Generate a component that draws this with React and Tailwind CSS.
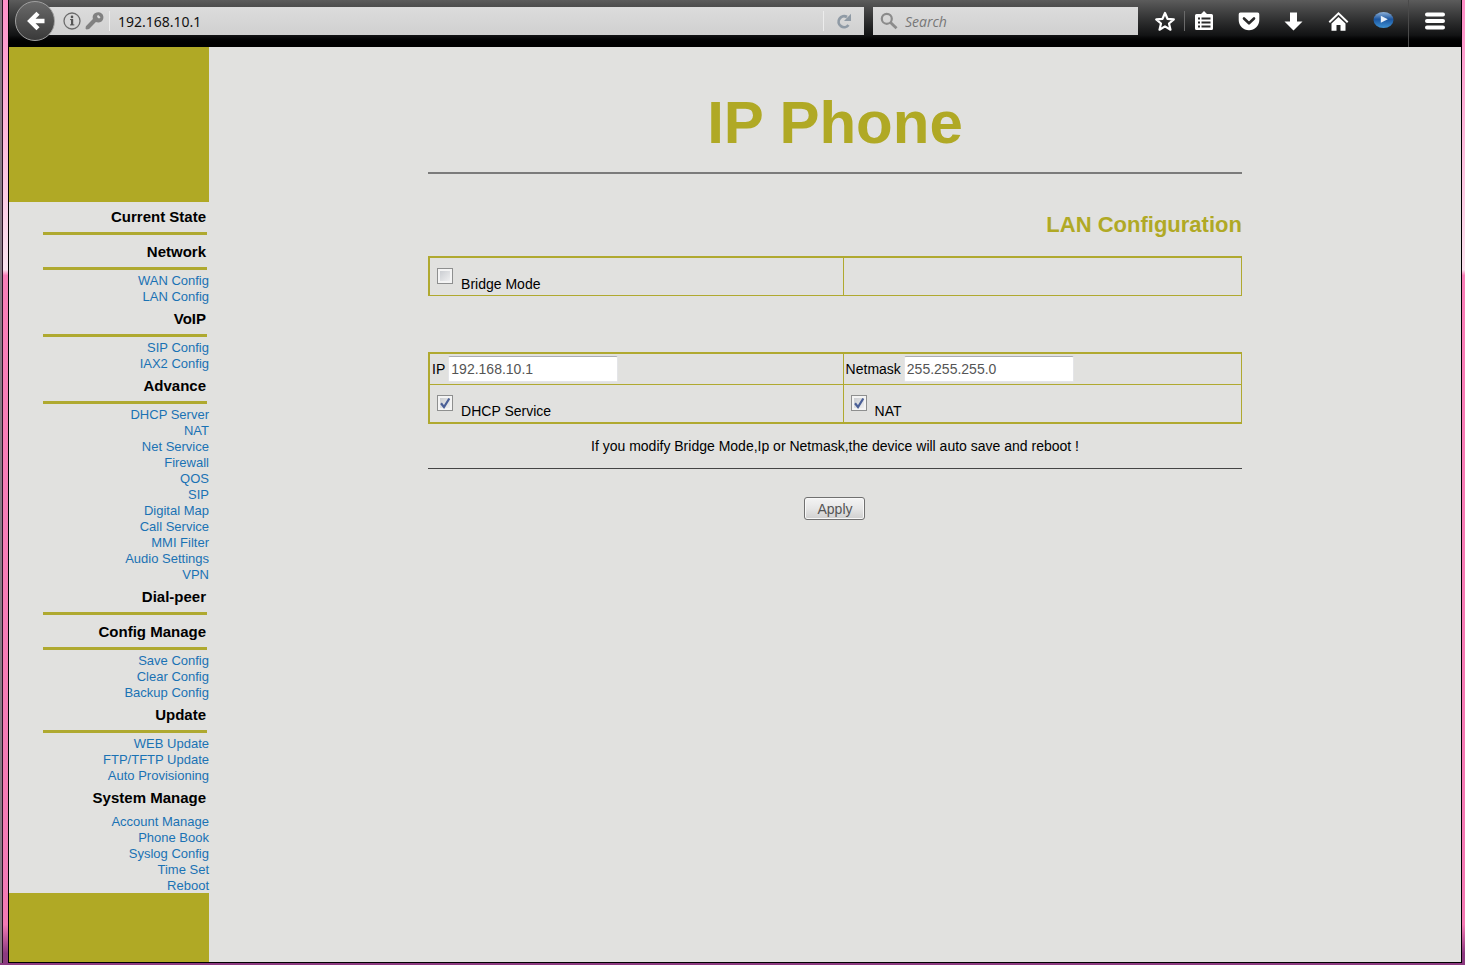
import React from "react";

const sections = [
  { title: "Current State", rule: true, links: [] },
  { title: "Network", rule: true, links: ["WAN Config", "LAN Config"] },
  { title: "VoIP", rule: true, links: ["SIP Config", "IAX2 Config"] },
  {
    title: "Advance",
    rule: true,
    links: [
      "DHCP Server",
      "NAT",
      "Net Service",
      "Firewall",
      "QOS",
      "SIP",
      "Digital Map",
      "Call Service",
      "MMI Filter",
      "Audio Settings",
      "VPN",
    ],
  },
  { title: "Dial-peer", rule: true, links: [] },
  { title: "Config Manage", rule: true, links: ["Save Config", "Clear Config", "Backup Config"] },
  { title: "Update", rule: true, links: ["WEB Update", "FTP/TFTP Update", "Auto Provisioning"] },
  {
    title: "System Manage",
    rule: false,
    links: ["Account Manage", "Phone Book", "Syslog Config", "Time Set", "Reboot"],
  },
];

function ToolButton({ label, className, children }) {
  return (
    <button type="button" aria-label={label} className={"flex h-8 shrink-0 items-center justify-center " + className}>
      {children}
    </button>
  );
}

function Toolbar() {
  return (
    <header className="flex h-[47px] items-center bg-linear-to-b from-[#5c5c5c] via-[#121314] via-75% to-black to-95% pb-[5px] pl-[6px] font-['Noto_Sans','Open_Sans',sans-serif]">
      <button
        type="button"
        aria-label="Back"
        className="z-10 flex size-10 shrink-0 items-center justify-center rounded-full border border-[#a0a0a0] bg-linear-to-b from-[#6a6a6a] to-[#3a3a3a]"
      >
        <svg width="22" height="22" viewBox="0 0 22 22" fill="none" stroke="#fff" strokeWidth="4.400">
          <path d="M20.500 11H7M14 3.200L6.200 11l7.800 7.800" />
        </svg>
      </button>
      <div className="-ml-3 flex h-7 min-w-0 flex-1 items-center bg-linear-to-b from-[#dcdcdc] to-[#d0d0d0] pl-5">
        <svg width="18" height="18" viewBox="0 0 18 18" className="shrink-0">
          <circle cx="9" cy="9" r="8" fill="none" stroke="#6b6b6b" strokeWidth="1.300" />
          <path d="M9.100 7.200v5.800" fill="none" stroke="#555" strokeWidth="2.200" />
          <path d="M7 7.600h3M7 12.900h4.300" fill="none" stroke="#555" strokeWidth="1" />
          <circle cx="9" cy="4.900" r="1.300" fill="#555" />
        </svg>
        <svg width="20" height="20" viewBox="0 0 20 20" className="ml-1 shrink-0" fill="#818181">
          <path
            fillRule="evenodd"
            d="M8.200 4C9.800 1.200 14.100.2 16.700 2.400c2.500 2.100 2.200 6.200-.2 8-1.700 1.300-4 1.300-5.600.6l-6.800 7-2.600.500L.500 17.600l.4-2.400 7-7.200c-.4-1.300-.3-2.900.3-4zM13.200 4a1.700 1.700 0 1 0 2.300 2.300z"
          />
        </svg>
        <span className="ml-1 h-5 w-px bg-[#ececec]" />
        <input
          aria-label="Address"
          defaultValue="192.168.10.1"
          className="ml-2 min-w-0 flex-1 bg-transparent pt-[2px] text-sm text-[#111] outline-none"
        />
        <span className="h-5 w-px bg-[#ececec]" />
        <button type="button" aria-label="Reload" className="flex h-7 w-10 items-center justify-center">
          <svg width="16" height="16" viewBox="0 0 16 16">
            <path d="M12.500 12A5.500 5.500 0 1 1 11 4" fill="none" stroke="#8f9aa5" strokeWidth="2.800" />
            <path d="M15 .8v7.200H8z" fill="#8f9aa5" />
          </svg>
        </button>
      </div>
      <div className="ml-[9px] flex h-7 w-[265px] shrink-0 items-center bg-linear-to-b from-[#dcdcdc] to-[#d0d0d0] pl-[7px]">
        <svg width="18" height="18" viewBox="0 0 18 18" fill="none" stroke="#8b8b8b">
          <circle cx="6.800" cy="6.800" r="5" strokeWidth="2.200" />
          <path d="M10.500 10.500l6 5.800" strokeWidth="2.800" />
        </svg>
        <input
          type="search"
          aria-label="Search"
          placeholder="Search"
          className="ml-[7px] min-w-0 flex-1 bg-transparent pt-[2px] font-['Open_Sans',sans-serif] text-sm italic text-[#222] outline-none placeholder:text-[#777]"
        />
      </div>
      <ToolButton label="Bookmark this page" className="ml-2 w-[38px]">
        <svg width="22" height="22" viewBox="0 0 22 22">
          <path
            d="M11 3l2.500 5.800 6.300.6-4.800 4.100 1.500 6.200L11 16.400l-5.500 3.300L7 13.500 2.200 9.400l6.300-.6z"
            fill="none"
            stroke="#fff"
            strokeWidth="2.200"
            strokeLinejoin="round"
          />
        </svg>
      </ToolButton>
      <span className="h-5 w-px shrink-0 bg-[#6a6a6a]" />
      <ToolButton label="Bookmarks" className="w-[38px]">
        <svg width="20" height="20" viewBox="0 0 20 20">
          <path d="M7 3l3-3 3 3h4.500A1.500 1.500 0 0 1 19 4.500v13a1.500 1.500 0 0 1-1.500 1.500h-15A1.500 1.500 0 0 1 1 17.500v-13A1.500 1.500 0 0 1 2.500 3z" fill="#fff" />
          <path d="M4 7.500h2M7.500 7.500h9M4 11.500h2M7.500 11.500h9M4 15.500h2M7.500 15.500h9" stroke="#2a2a2a" strokeWidth="1.800" />
        </svg>
      </ToolButton>
      <ToolButton label="Pocket" className="ml-[3px] w-[45px]">
        <svg width="22" height="20" viewBox="0 0 22 20">
          <path d="M2.500 1.500h17A1.800 1.800 0 0 1 21.300 3.500v5.500c0 5.600-4.600 10.200-10.300 10.200S.7 14.600.7 9V3.500a1.800 1.800 0 0 1 1.800-2z" fill="#fff" />
          <path d="M6 7.500l5 4.800 5-4.800" fill="none" stroke="#2a2a2a" strokeWidth="2.600" strokeLinecap="round" strokeLinejoin="round" />
        </svg>
      </ToolButton>
      <ToolButton label="Downloads" className="w-[45px]">
        <svg width="20" height="20" viewBox="0 0 20 20">
          <path d="M6 1.500h7V10.500h5.500L9.500 19.500.5 10.500H6z" fill="#fff" />
        </svg>
      </ToolButton>
      <ToolButton label="Home" className="w-[45px]">
        <svg width="22" height="20" viewBox="0 0 22 20">
          <path d="M1.300 11.300L10.500 2.300l9.200 9" fill="none" stroke="#fff" strokeWidth="2" />
          <path d="M10.500 6l7 6.500v7.200h-5v-5.700h-4v5.700h-5v-7.200z" fill="#fff" />
        </svg>
      </ToolButton>
      <ToolButton label="Media player" className="w-[45px]">
        <svg width="22" height="20" viewBox="0 0 22 20">
          <defs>
            <linearGradient id="orb" x1="0" y1="0" x2="0" y2="1">
              <stop offset="0" stopColor="#8fb2da" />
              <stop offset="0.450" stopColor="#1b559f" />
              <stop offset="1" stopColor="#3f93d6" />
            </linearGradient>
          </defs>
          <ellipse cx="10.500" cy="9" rx="10" ry="8" fill="url(#orb)" />
          <path d="M7.800 4.800l7 3.500-7 3.500z" fill="#e8f1fb" />
        </svg>
      </ToolButton>
      <span className="-mb-[5px] ml-[2px] h-[47px] w-px shrink-0 bg-[#4a4a4a]" />
      <ToolButton label="Open menu" className="w-[52px]">
        <svg width="20" height="18" viewBox="0 0 20 18" stroke="#fff" strokeWidth="4" strokeLinecap="round">
          <path d="M2 2.500h16M2 9h16M2 15.500h16" />
        </svg>
      </ToolButton>
    </header>
  );
}

function Sidebar() {
  return (
    <nav className="flex w-[200px] shrink-0 flex-col text-right">
      <div className="h-[155px] bg-[#b0a925]" />
      {sections.map((s) => (
        <section key={s.title}>
          <h3 className="pr-[3px] text-[15px] leading-[30px] font-bold text-black">{s.title}</h3>
          {s.rule && <div className="mr-[2px] mb-[2px] ml-[34px] h-[3px] bg-[#afa930]" />}
          <ul className="-mb-px pt-px">
            {s.links.map((l) => (
              <li key={l} className="text-[13px] leading-4">
                <a href="#" className="text-[#1a72b4]">
                  {l}
                </a>
              </li>
            ))}
          </ul>
        </section>
      ))}
      <div className="flex-1 bg-[#b0a925]" />
    </nav>
  );
}

function Check({ label, defaultChecked }) {
  return (
    <label className="flex h-[37px] items-end gap-2 pb-[3px] pl-[7px] leading-4">
      <span className="mb-2 grid size-4">
        <input
          type="checkbox"
          defaultChecked={defaultChecked}
          className="peer col-start-1 row-start-1 size-4 appearance-none border border-[#8e8f8f] bg-linear-to-br from-[#c4c7cc] to-[#f6f6f6] shadow-[inset_0_0_0_2px_#f4f4f4]"
        />
        <svg viewBox="0 0 16 16" className="pointer-events-none invisible col-start-1 row-start-1 size-4 peer-checked:visible">
          <path d="M4 8.200l3 3.800L12.300 3.500" fill="none" stroke="#4a5f97" strokeWidth="2.200" />
        </svg>
      </span>
      {label}
    </label>
  );
}

function Field({ label, value }) {
  return (
    <label className="flex h-[30px] items-center gap-[3px] pl-[2px]">
      {label}
      <input
        defaultValue={value}
        className="h-[26px] w-[170px] rounded-[2px] border border-[#e4e5e8] border-t-[#abadb3] bg-white px-[2px] text-sm text-[#555]"
      />
    </label>
  );
}

export default function App() {
  return (
    <div className="flex min-h-screen flex-col bg-[#e1e1df] font-['Liberation_Sans',Arial,sans-serif] text-sm text-black">
      <div className="flex flex-1">
        <div className="w-[2px] shrink-0 bg-[#8a7a86]" />
        <div className="w-px shrink-0 bg-[#2a1024]" />
        <div className="w-[5px] shrink-0 bg-[linear-gradient(to_bottom,#ff8fc8_0%,#fbe3ef_28%,#f97fb8_28.600%,#f37ab4_96%,#8c3a80_99%)]" />
        <div className="flex min-w-0 flex-1 flex-col border-x border-b border-black">
          <Toolbar />
          <div className="flex flex-1">
            <Sidebar />
            <main className="min-w-0 flex-1">
              <div className="mx-auto w-[65%] pt-10">
                <h1 className="text-center text-[60px] leading-[72px] font-bold text-[#b0a925]">IP Phone</h1>
                <hr className="mt-[13px] border-t-2 border-[#7b7b7b]" />
                <h2 className="mt-[35px] text-right text-[22px] leading-8 font-bold text-[#b0a925]">LAN Configuration</h2>
                <form onSubmit={(e) => e.preventDefault()}>
                  <table className="mt-[15px] w-full table-fixed border-separate border-spacing-0 border-t-2 border-r border-b border-l-2 border-[#b0a930]">
                    <tbody>
                      <tr>
                        <td className="w-[51%] border-r border-[#b0a930] p-0">
                          <Check label="Bridge Mode" />
                        </td>
                        <td className="p-0" />
                      </tr>
                    </tbody>
                  </table>
                  <table className="mt-14 w-full table-fixed border-separate border-spacing-0 border-t-2 border-r border-b-2 border-l-2 border-[#b0a930]">
                    <tbody>
                      <tr>
                        <td className="w-[51%] border-r border-b border-[#b0a930] p-0">
                          <Field label="IP" value="192.168.10.1" />
                        </td>
                        <td className="border-b border-[#b0a930] p-0">
                          <Field label="Netmask" value="255.255.255.0" />
                        </td>
                      </tr>
                      <tr>
                        <td className="border-r border-[#b0a930] p-0">
                          <Check label="DHCP Service" defaultChecked />
                        </td>
                        <td className="p-0">
                          <Check label="NAT" defaultChecked />
                        </td>
                      </tr>
                    </tbody>
                  </table>
                  <p className="mt-[14px] text-center leading-4">
                    If you modify Bridge Mode,Ip or Netmask,the device will auto save and reboot !
                  </p>
                  <hr className="mt-[14px] border-t border-[#444]" />
                  <div className="mt-7 flex justify-center">
                    <button
                      type="submit"
                      className="h-[23px] w-[61px] rounded-[3px] border border-[#707070] bg-linear-to-b from-[#f4f4f4] via-[#e6e6e6] to-[#cfcfcf] text-sm leading-5 text-[#555] shadow-[inset_0_0_0_1px_#f8f8f8]"
                    >
                      Apply
                    </button>
                  </div>
                </form>
              </div>
            </main>
          </div>
        </div>
        <div className="w-[3px] shrink-0 bg-[linear-gradient(to_bottom,#ff8fc8_0%,#fbe3ef_28%,#f97fb8_28.600%,#f37ab4_96%,#8c3a80_99%)]" />
      </div>
      <div className="h-[2px] bg-[#8c3a80]" />
    </div>
  );
}
